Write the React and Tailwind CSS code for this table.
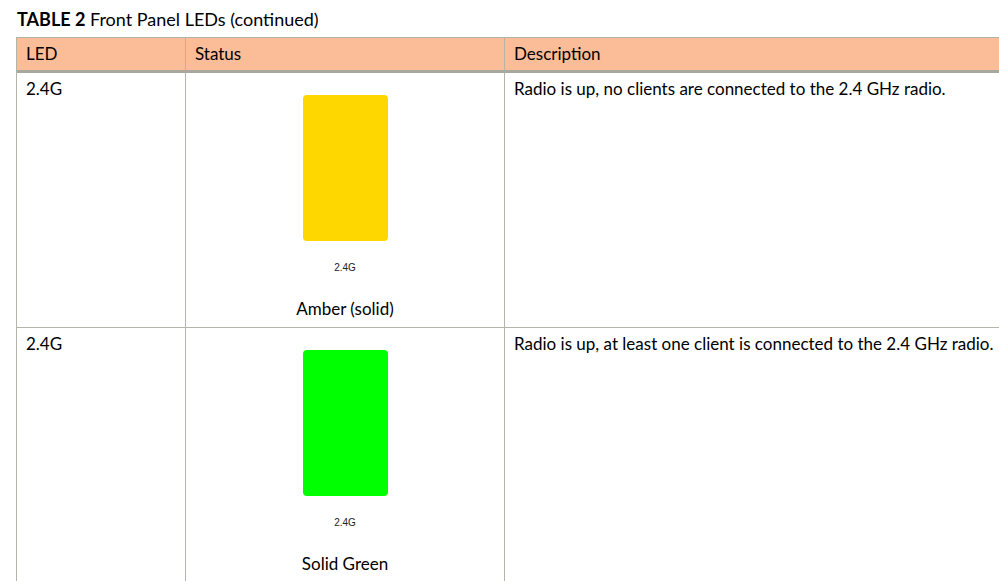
export default function App() {
  const rows = [
    {
      led: '2.4G',
      color: 'bg-[#ffd700]',
      label: 'Amber (solid)',
      desc: 'Radio is up, no clients are connected to the 2.4 GHz radio.',
    },
    {
      led: '2.4G',
      color: 'bg-[#00ff00]',
      label: 'Solid Green',
      desc: 'Radio is up, at least one client is connected to the 2.4 GHz radio.',
    },
  ];

  return (
    <div className="w-[999px] h-[581px] overflow-hidden bg-white text-black font-['Lato','Open_Sans',sans-serif]">
      {/* Caption */}
      <div className="pl-[17px] pt-[8px] h-[37px] text-[18px] leading-[22px]">
        <span className="font-bold">TABLE 2</span> Front Panel LEDs (continued)
      </div>

      {/* Table */}
      <div className="ml-[16px] w-[1000px] border-l border-[#b4b4a8]">
        {/* Header */}
        <div className="flex h-[36px] bg-[#fbbc98] border-t border-[#b4b4a8] border-b-[3px] border-b-[#a8a89e] text-[17px]">
          <div className="w-[169px] pl-[9px] flex items-center border-r border-[#b4b4a8]">LED</div>
          <div className="w-[319px] pl-[9px] flex items-center border-r border-[#b4b4a8]">Status</div>
          <div className="flex-1 pl-[9px] flex items-center">Description</div>
        </div>

        {/* Body */}
        {rows.map((row, i) => (
          <div key={i} className="flex h-[255px] border-b border-[#b4b4a8] text-[17px] leading-[20px]">
            <div className="w-[169px] pl-[9px] pt-[6px] border-r border-[#b4b4a8]">{row.led}</div>
            <div className="w-[319px] border-r border-[#b4b4a8] flex flex-col items-center pt-[22px]">
              <div className={`w-[85px] h-[146px] rounded-[4px] ${row.color}`} />
              <div className="mt-[21px] text-[10px] leading-[12px] font-['Liberation_Sans',Arial,sans-serif] text-[#222]">
                2.4G
              </div>
              <div className="mt-[25px]">{row.label}</div>
            </div>
            <div className="flex-1 pl-[9px] pt-[6px]">{row.desc}</div>
          </div>
        ))}
      </div>
    </div>
  );
}
